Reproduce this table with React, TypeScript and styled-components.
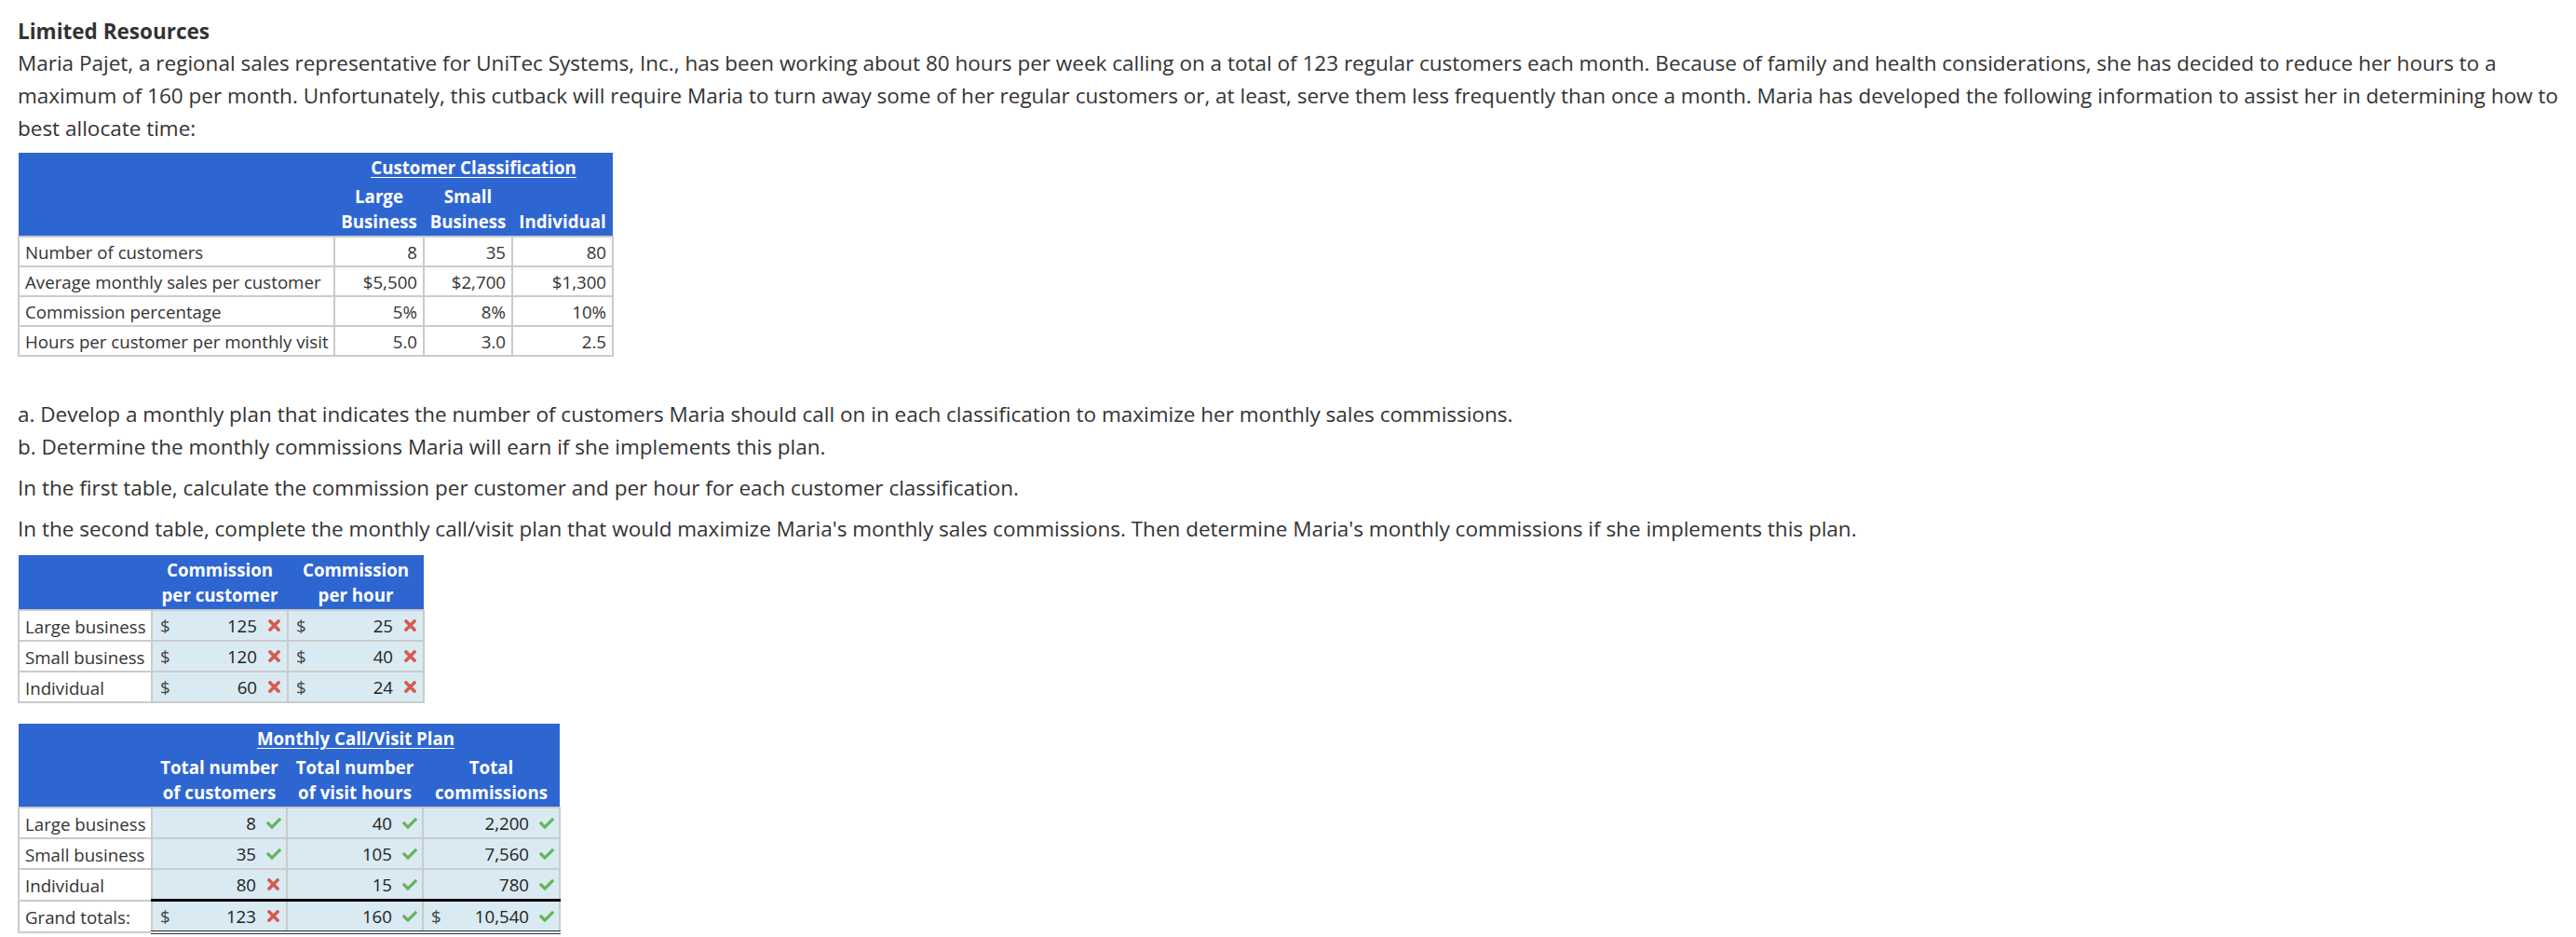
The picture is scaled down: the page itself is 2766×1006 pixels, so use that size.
import React from 'react';
import styled, { createGlobalStyle } from 'styled-components';
import { FaCheck, FaTimes } from 'react-icons/fa';

const BLUE = '#2e66d1';
const CELL_BLUE = '#d9eaf2';
const GRID = '#cbcbcb';
const TEXT = '#333333';

const GlobalStyle = createGlobalStyle`
  html, body {
    margin: 0;
    padding: 0;
    background: #ffffff;
  }
  body {
    font-family: "Open Sans", "Liberation Sans", sans-serif;
    color: ${TEXT};
  }
`;

type Mark = 'ok' | 'bad';

const infoRows = [
  { label: 'Number of customers', values: ['8', '35', '80'] },
  { label: 'Average monthly sales per customer', values: ['$5,500', '$2,700', '$1,300'] },
  { label: 'Commission percentage', values: ['5%', '8%', '10%'] },
  { label: 'Hours per customer per monthly visit', values: ['5.0', '3.0', '2.5'] },
];

const commissionRows = [
  { label: 'Large business', perCustomer: '125', perHour: '25' },
  { label: 'Small business', perCustomer: '120', perHour: '40' },
  { label: 'Individual', perCustomer: '60', perHour: '24' },
];

const planRows: { label: string; cells: { value: string; mark: Mark; dollar?: boolean }[]; total?: boolean }[] = [
  {
    label: 'Large business',
    cells: [
      { value: '8', mark: 'ok' },
      { value: '40', mark: 'ok' },
      { value: '2,200', mark: 'ok' },
    ],
  },
  {
    label: 'Small business',
    cells: [
      { value: '35', mark: 'ok' },
      { value: '105', mark: 'ok' },
      { value: '7,560', mark: 'ok' },
    ],
  },
  {
    label: 'Individual',
    cells: [
      { value: '80', mark: 'bad' },
      { value: '15', mark: 'ok' },
      { value: '780', mark: 'ok' },
    ],
  },
  {
    label: 'Grand totals:',
    total: true,
    cells: [
      { value: '123', mark: 'bad', dollar: true },
      { value: '160', mark: 'ok' },
      { value: '10,540', mark: 'ok', dollar: true },
    ],
  },
];

const AnswerValue = ({ value, mark, dollar }: { value: string; mark: Mark; dollar?: boolean }) => (
  <AnswerInner>
    <Dollar>{dollar ? '$' : ''}</Dollar>
    <Amount>{value}</Amount>
    <MarkIcon $mark={mark}>{mark === 'ok' ? <FaCheck size={16} /> : <FaTimes size={19} />}</MarkIcon>
  </AnswerInner>
);

const App = () => {
  return (
    <Page>
      <GlobalStyle />
      <Title>Limited Resources</Title>
      <Paragraph>
        Maria Pajet, a regional sales representative for UniTec Systems, Inc., has been working about 80 hours per
        week calling on a total of 123 regular customers each month. Because of family and health considerations, she
        has decided to reduce her hours to a maximum of 160 per month. Unfortunately, this cutback will require Maria
        to turn away some of her regular customers or, at least, serve them less frequently than once a month. Maria
        has developed the following information to assist her in determining how to best allocate time:
      </Paragraph>

      <Table $width={638}>
        <colgroup>
          <col style={{ width: 339 }} />
          <col style={{ width: 96 }} />
          <col style={{ width: 95 }} />
          <col style={{ width: 108 }} />
        </colgroup>
        <thead>
          <tr>
            <HeadCell />
            <HeadCell colSpan={3}>
              <Underlined>Customer Classification</Underlined>
            </HeadCell>
          </tr>
          <tr>
            <HeadCell />
            <HeadCell>
              Large
              <br />
              Business
            </HeadCell>
            <HeadCell>
              Small
              <br />
              Business
            </HeadCell>
            <HeadCell>Individual</HeadCell>
          </tr>
        </thead>
        <tbody>
          {infoRows.map(row => (
            <tr key={row.label}>
              <LabelCell>{row.label}</LabelCell>
              {row.values.map((v, i) => (
                <NumberCell key={i}>{v}</NumberCell>
              ))}
            </tr>
          ))}
        </tbody>
      </Table>

      <TaskList>
        a. Develop a monthly plan that indicates the number of customers Maria should call on in each classification
        to maximize her monthly sales commissions.
        <br />
        b. Determine the monthly commissions Maria will earn if she implements this plan.
      </TaskList>
      <Instruction>
        In the first table, calculate the commission per customer and per hour for each customer classification.
      </Instruction>
      <Instruction>
        In the second table, complete the monthly call/visit plan that would maximize Maria's monthly sales
        commissions. Then determine Maria's monthly commissions if she implements this plan.
      </Instruction>

      <CommissionTable $width={435}>
        <colgroup>
          <col style={{ width: 143 }} />
          <col style={{ width: 146 }} />
          <col style={{ width: 146 }} />
        </colgroup>
        <thead>
          <tr>
            <HeadCell />
            <HeadCell>
              Commission
              <br />
              per customer
            </HeadCell>
            <HeadCell>
              Commission
              <br />
              per hour
            </HeadCell>
          </tr>
        </thead>
        <tbody>
          {commissionRows.map(row => (
            <tr key={row.label}>
              <LabelCell>{row.label}</LabelCell>
              <AnswerCell>
                <AnswerValue value={row.perCustomer} mark="bad" dollar />
              </AnswerCell>
              <AnswerCell>
                <AnswerValue value={row.perHour} mark="bad" dollar />
              </AnswerCell>
            </tr>
          ))}
        </tbody>
      </CommissionTable>

      <PlanTable $width={581}>
        <colgroup>
          <col style={{ width: 143 }} />
          <col style={{ width: 145 }} />
          <col style={{ width: 146 }} />
          <col style={{ width: 147 }} />
        </colgroup>
        <thead>
          <tr>
            <HeadCell />
            <HeadCell colSpan={3}>
              <Underlined>Monthly Call/Visit Plan</Underlined>
            </HeadCell>
          </tr>
          <tr>
            <HeadCell />
            <HeadCell>
              Total number
              <br />
              of customers
            </HeadCell>
            <HeadCell>
              Total number
              <br />
              of visit hours
            </HeadCell>
            <HeadCell>
              Total
              <br />
              commissions
            </HeadCell>
          </tr>
        </thead>
        <tbody>
          {planRows.map(row => (
            <tr key={row.label}>
              <LabelCell>{row.label}</LabelCell>
              {row.cells.map((c, i) => (
                <AnswerCell key={i} $total={row.total}>
                  <AnswerValue value={c.value} mark={c.mark} dollar={c.dollar} />
                </AnswerCell>
              ))}
            </tr>
          ))}
        </tbody>
      </PlanTable>
    </Page>
  );
};

const Page = styled.div`
  padding: 18px 10px 10px 19px;
  font-size: 22.5px;
  line-height: 35px;
`;

const Title = styled.h2`
  margin: 0;
  font-size: 22.5px;
  font-weight: 700;
  line-height: 32px;
`;

const Paragraph = styled.p`
  margin: 0;
`;

const TaskList = styled.p`
  margin: 44px 0 0;
`;

const Instruction = styled.p`
  margin: 9px 0 0;
`;

const Table = styled.table<{ $width: number }>`
  width: ${p => p.$width}px;
  table-layout: fixed;
  border-collapse: collapse;
  font-size: 18.7px;
  line-height: 27px;
  margin-top: 9px;
`;

const CommissionTable = styled(Table)`
  margin-top: 11px;
`;

const PlanTable = styled(Table)`
  margin-top: 22px;
`;

const HeadCell = styled.th`
  background: ${BLUE};
  color: #ffffff;
  font-weight: 700;
  text-align: center;
  vertical-align: bottom;
  padding: 2px 3px 2px;
  white-space: nowrap;
`;

const Underlined = styled.span`
  text-decoration: underline;
  text-underline-offset: 3px;
`;

const LabelCell = styled.td`
  background: #ffffff;
  border: 2px solid ${GRID};
  padding: 2px 6px 1px;
  white-space: nowrap;
`;

const NumberCell = styled.td`
  background: #ffffff;
  border: 2px solid ${GRID};
  padding: 2px 6px 1px;
  text-align: right;
`;

const AnswerCell = styled.td<{ $total?: boolean }>`
  background: ${CELL_BLUE};
  border: 2px solid ${GRID};
  border-top: ${p => (p.$total ? '3px solid #000000' : `2px solid ${GRID}`)};
  border-bottom: ${p => (p.$total ? '4px double #333333' : `2px solid ${GRID}`)};
  padding: 2px 5px 2px 8px;
  color: #222222;
`;

const AnswerInner = styled.div`
  display: flex;
  align-items: center;
`;

const Dollar = styled.span`
  width: 12px;
  color: #444444;
`;

const Amount = styled.span`
  flex: 1;
  text-align: right;
`;

const MarkIcon = styled.span<{ $mark: Mark }>`
  display: inline-flex;
  justify-content: center;
  align-items: center;
  width: 17px;
  margin-left: 10px;
  color: ${p => (p.$mark === 'ok' ? '#66b35a' : '#d65a4f')};
`;

export default App;
